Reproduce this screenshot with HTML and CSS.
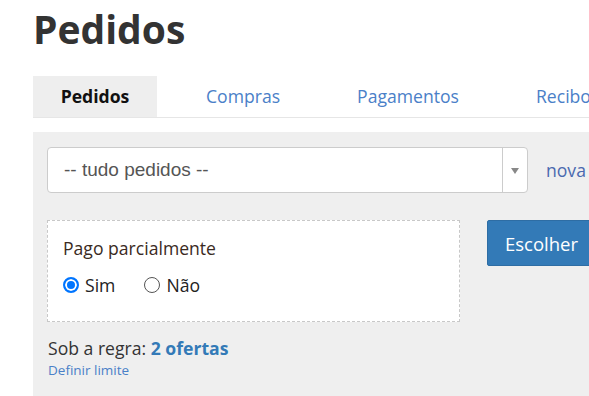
FILE: index.html
```html
<!DOCTYPE html>
<html lang="pt">
<head>
    <meta charset="UTF-8">
    <title>Pedidos</title>
    <link rel="stylesheet" href="styles.css">
</head>
<body>
    <div class="page">
        <h1 class="title">Pedidos</h1>

        <!-- Tabs -->
        <ul class="tabs">
            <li class="tab active">Pedidos</li>
            <li class="tab">Compras</li>
            <li class="tab">Pagamentos</li>
            <li class="tab">Recibo</li>
        </ul>

        <!-- Filter panel -->
        <div class="panel">
            <div class="select-row">
                <div class="select-box">
                    <span class="select-text">-- tudo pedidos --</span>
                    <span class="select-arrow"></span>
                </div>
                <a class="nova-link" href="#">nova</a>
            </div>

            <div class="filter-row">
                <div class="filter-box">
                    <div class="filter-label">Pago parcialmente</div>
                    <div class="radios">
                        <label class="radio"><span class="dot checked"></span>Sim</label>
                        <label class="radio"><span class="dot"></span>Não</label>
                    </div>
                </div>
                <button class="btn-choose">Escolher</button>
            </div>

            <div class="rule">Sob a regra: <a href="#">2 ofertas</a></div>
            <a class="limit-link" href="#">Definir limite</a>
        </div>
    </div>
</body>
</html>
```

FILE: styles.css
```css
/* General */
* {
    margin: 0;
    padding: 0;
    box-sizing: border-box;
}
body {
    font-family: 'Open Sans', 'Lato', sans-serif;
    color: #333;
    background-color: #fff;
    overflow: hidden;
}
a {
    text-decoration: none;
    color: #3a77c0;
}
.page {
    padding-left: 33px;
    width: 700px;
}

/* Title */
.title {
    font-size: 39px;
    font-weight: 700;
    color: #333;
    line-height: 1;
    padding: 9px 0 0 0;
    height: 76px;
}

/* Tabs */
.tabs {
    display: flex;
    list-style: none;
    border-bottom: 1px solid #e6e6e6;
    height: 42px;
}
.tab {
    padding: 0 28px;
    margin-right: 21px;
    text-align: center;
    font-size: 17.6px;
    line-height: 40px;
    color: #4a80c8;
    white-space: nowrap;
}
.tab.active {
    width: 124px;
    padding: 0;
    background-color: #eee;
    color: #111;
    font-weight: 700;
    margin-right: 21px;
}

/* Panel */
.panel {
    margin-top: 14px;
    background-color: #efefef;
    padding: 15px 14px 20px;
    height: 300px;
}
.select-row {
    display: flex;
    align-items: center;
}
.select-box {
    width: 481px;
    height: 46px;
    background: #fff;
    border: 1px solid #ccc;
    border-radius: 4px;
    display: flex;
    align-items: center;
}
.select-text {
    flex: 1;
    padding-left: 16px;
    font-family: 'Liberation Sans', Arial, sans-serif;
    font-size: 19px;
    color: #555;
}
.select-arrow {
    width: 25px;
    height: 100%;
    border-left: 1px solid #ccc;
    position: relative;
}
.select-arrow::after {
    content: "";
    position: absolute;
    left: 8px;
    top: 20px;
    border-left: 4px solid transparent;
    border-right: 4px solid transparent;
    border-top: 6px solid #888;
}
.nova-link {
    margin-left: 18px;
    font-size: 17.6px;
    color: #4a69b0;
}

.filter-row {
    display: flex;
    align-items: flex-start;
    margin-top: 27px;
}
.filter-box {
    width: 413px;
    height: 102px;
    background: #fff;
    border: 1px dashed #c8c8c8;
    padding: 15px 15px;
}
.filter-label {
    font-size: 17.6px;
    color: #3a2a22;
}
.radios {
    display: flex;
    gap: 29px;
    margin-top: 13px;
}
.radio {
    display: flex;
    align-items: center;
    font-size: 17.6px;
    color: #222;
}
.dot {
    width: 16px;
    height: 16px;
    border: 1px solid #555;
    border-radius: 50%;
    margin-right: 6px;
    background: #fff;
}
.dot.checked {
    border: 2px solid #0075ff;
    box-shadow: inset 0 0 0 2px #fff;
    background: #0075ff;
}
.btn-choose {
    margin-left: 27px;
    width: 110px;
    height: 46px;
    background-color: #337ab7;
    border: 1px solid #2e6da4;
    border-radius: 2px;
    color: #fff;
    font-family: 'Open Sans', sans-serif;
    font-size: 18.5px;
    text-align: left;
    padding-left: 17px;
}

.rule {
    margin-top: 14px;
    font-size: 17.6px;
    color: #333;
    padding-left: 1px;
}
.rule a {
    font-weight: 700;
    color: #337ab7;
}
.limit-link {
    display: block;
    margin-top: 1px;
    font-size: 13.5px;
    color: #4a80c8;
    padding-left: 1px;
}
```
